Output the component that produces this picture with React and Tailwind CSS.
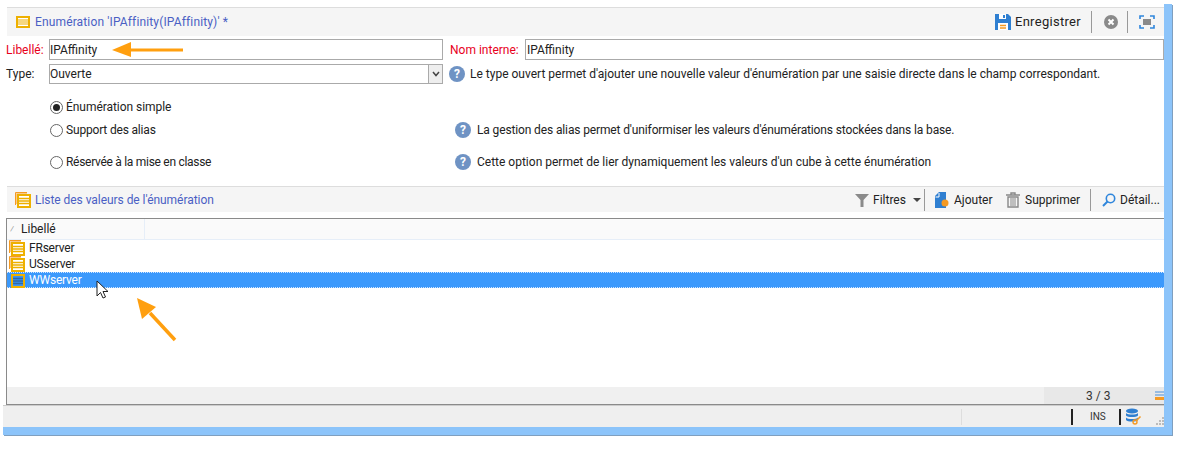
const FONT = "font-['Roboto','Noto_Sans',sans-serif]";

function EnumIcon({ stacked, dark }) {
  return (
    <svg width="16" height="16" viewBox="0 0 16 16" className="shrink-0">
      {stacked && <path d="M0.5 13V0.5H12" fill="none" stroke="#f59a23" strokeWidth="1" />}
      {stacked && <path d="M1.5 12V1.5H12" fill="none" stroke="#f8c98a" strokeWidth="1" />}
      <rect x="3" y="3" width="12" height="12" fill={dark ? '#3b93f0' : '#fff'} stroke="#eeb000" strokeWidth="2" />
      <path d="M4 6.5H14M4 9H14M4 11.5H14" stroke={dark ? '#2f6aa8' : '#eeb000'} strokeWidth="1.4" />
    </svg>
  );
}

function HelpIcon() {
  return (
    <span className="flex h-4 w-4 shrink-0 items-center justify-center rounded-full bg-[#6f93c4] text-[12px] font-bold leading-none text-white">?</span>
  );
}

function Radio({ checked, label, className, labelClass }) {
  return (
    <div className={`flex items-center gap-[3px] ${className}`}>
      <span className="flex h-[13px] w-[13px] items-center justify-center rounded-full border border-[#666] bg-white">
        {checked && <span className="h-[7px] w-[7px] rounded-full bg-[#222]" />}
      </span>
      <span className={labelClass}>{label}</span>
    </div>
  );
}

function Divider() {
  return <span className="block h-[22px] w-px bg-[#999]" />;
}

function Row({ label, selected }) {
  return (
    <div className={`flex h-4 items-center gap-[4px] pl-[2px] tracking-[-0.2px] ${selected ? 'border-y border-dotted border-[#cfe4ff] bg-[#3b99fc] text-white' : ''}`}>
      <EnumIcon stacked={!selected} dark={selected} />
      <span>{label}</span>
    </div>
  );
}

export default function App() {
  return (
    <div className={`${FONT} relative h-[465px] w-[1188px] bg-white pl-[3px] pt-[4px] text-[12px] leading-4 text-[#222]`}>
      <div className="flex h-[431px] w-[1169px] flex-col border-b-[8px] border-r-[8px] border-b-[#8cc4fa] border-r-[#8cc4fa] shadow-[1px_1px_0_#7f9fbf]">
        <div className="flex-1 pl-[4px] pt-[3px]">
          {/* title bar */}
          <div className="flex h-[29px] items-center border-t border-[#ddd] bg-[#f5f5f5] pl-[9px]">
            <svg width="14" height="12" viewBox="0 0 14 12" className="shrink-0">
              <rect x="1" y="1" width="12" height="10" fill="#fff" stroke="#eeb000" strokeWidth="2" />
              <path d="M2 4H12M2 6H12M2 8H12" stroke="#eeb000" strokeWidth="1.2" />
            </svg>
            <span className="ml-[5px] tracking-[0.14px] text-[#4a5fc4]">Enumération 'IPAffinity(IPAffinity)' *</span>
            <div className="ml-auto flex items-center pr-[9px]">
              <svg width="16" height="16" viewBox="0 0 16 16" className="shrink-0">
                <path d="M0 0H13L16 3V16H0Z" fill="#2f7fd1" />
                <rect x="4" y="0" width="7" height="5" fill="#fff" />
                <rect x="8" y="1" width="2" height="3" fill="#2f7fd1" />
                <rect x="3" y="9" width="10" height="7" fill="#fff" />
                <path d="M5 11.5H11M5 14H11" stroke="#f59a23" strokeWidth="1.4" />
              </svg>
              <span className="ml-[4px] text-[13px] tracking-[0.3px]">Enregistrer</span>
              <span className="ml-[10px]"><Divider /></span>
              <svg width="14" height="14" viewBox="0 0 14 14" className="ml-[12px] shrink-0">
                <circle cx="7" cy="7" r="7" fill="#8a8a8a" />
                <path d="M4.5 4.5L9.5 9.5M9.5 4.5L4.5 9.5" stroke="#fff" strokeWidth="2" />
              </svg>
              <span className="ml-[9px]"><Divider /></span>
              <svg width="16" height="14" viewBox="0 0 16 14" className="ml-[11px] shrink-0">
                <path d="M1 4V1H5M11 1H15V4M15 10V13H11M5 13H1V10" fill="none" stroke="#2f86dc" strokeWidth="1.6" />
                <rect x="4" y="4" width="8" height="6" fill="#8a8a8a" />
              </svg>
            </div>
          </div>

          {/* form */}
          <div className="-ml-[1px] mt-[3px] flex items-center">
            <span className="w-[43px] text-[#e8001c]">Libellé:</span>
            <div className="flex h-[21px] w-[394px] items-center border border-[#aaa] bg-white">IPAffinity</div>
            <span className="ml-[7px] w-[75px] text-[#e8001c]">Nom interne:</span>
            <div className="flex h-[21px] flex-1 items-center border border-[#aaa] bg-white pl-[1px]">IPAffinity</div>
          </div>
          <div className="-ml-[1px] mt-[4px] flex items-center">
            <span className="w-[43px]">Type:</span>
            <div className="flex h-[20px] w-[394px] items-center border border-[#aaa] bg-white">
              <span className="flex-1">Ouverte</span>
              <span className="flex h-[18px] w-[14px] items-center justify-center border-l border-[#aaa] bg-[#eee]">
                <svg width="8" height="6" viewBox="0 0 8 6"><path d="M1 1L4 4.5L7 1" fill="none" stroke="#444" strokeWidth="1.5" /></svg>
              </span>
            </div>
            <span className="ml-[6px]"><HelpIcon /></span>
            <span className="ml-[5px]">Le type ouvert permet d'ajouter une nouvelle valeur d'énumération par une saisie directe dans le champ correspondant.</span>
          </div>

          <div className="mt-[15px] pl-[43px]">
            <Radio checked label="Énumération simple" labelClass="tracking-[-0.05px]" />
            <div className="mt-[7px] flex items-center">
              <Radio label="Support des alias" className="w-[405px]" labelClass="tracking-[-0.18px]" />
              <HelpIcon />
              <span className="ml-[6px] tracking-[-0.13px]">La gestion des alias permet d'uniformiser les valeurs d'énumérations stockées dans la base.</span>
            </div>
            <div className="mt-[16px] flex items-center">
              <Radio label="Réservée à la mise en classe" className="w-[405px]" labelClass="tracking-[-0.29px]" />
              <HelpIcon />
              <span className="ml-[6px]">Cette option permet de lier dynamiquement les valeurs d'un cube à cette énumération</span>
            </div>
          </div>

          {/* list */}
          <div className="mt-[16px] flex h-[26px] items-center border-t border-[#ddd] bg-[#f5f5f5] pl-[8px]">
            <EnumIcon stacked />
            <span className="ml-[4px] tracking-[-0.05px] text-[#4a5fc4]">Liste des valeurs de l'énumération</span>
            <div className="ml-auto flex items-center pr-[5px]">
              <svg width="14" height="14" viewBox="0 0 14 14"><path d="M0 1H14L8.5 7V14H5.5V7Z" fill="#8a8a8a" /></svg>
              <span className="ml-[4px] w-[31px]">Filtres</span>
              <svg width="8" height="4" viewBox="0 0 8 4" className="ml-[9px]"><path d="M0 0H8L4 4Z" fill="#444" /></svg>
              <span className="ml-[3px]"><Divider /></span>
              <svg width="16" height="16" viewBox="0 0 16 16" className="ml-[9px]">
                <path d="M1 4L5 0H12V16H1Z" fill="#2f7fd1" />
                <path d="M5 1V5H1.5" fill="none" stroke="#fff" strokeWidth="1" />
                <circle cx="11" cy="11" r="3.5" fill="#f59a23" />
              </svg>
              <span className="ml-[4px] w-[39px]">Ajouter</span>
              <svg width="14" height="16" viewBox="0 0 14 16" className="ml-[13px]">
                <path d="M0 3H14M5 3V1H9V3" fill="none" stroke="#888" strokeWidth="1.4" />
                <path d="M2 5H12V15H2Z" fill="none" stroke="#888" strokeWidth="1.4" />
                <path d="M5 6V14M7 6V14M9 6V14" stroke="#888" strokeWidth="1" />
              </svg>
              <span className="ml-[5px] w-[55px]">Supprimer</span>
              <span className="ml-[10px]"><Divider /></span>
              <svg width="14" height="14" viewBox="0 0 14 14" className="ml-[11px]">
                <circle cx="8.5" cy="5.5" r="4.2" fill="none" stroke="#2f86dc" strokeWidth="1.6" />
                <path d="M5.5 8.5L1 13" stroke="#2f86dc" strokeWidth="2" />
              </svg>
              <span className="ml-[4px] w-[39px]">Détail...</span>
            </div>
          </div>

          <div className="-ml-[1px] mt-[6px] flex h-[187px] flex-col border-b border-l border-t border-[#8a8a8a]">
            <div className="flex h-[21px] items-center border-b border-[#e6eef8] bg-[#fafafa]">
              <span className="flex h-full w-[138px] items-center border-r border-[#e6eef8] pl-[3px]">
                <span className="w-[11px] text-[9px] text-[#888]">⁄</span>
                <span>Libellé</span>
              </span>
            </div>
            <Row label="FRserver" />
            <Row label="USserver" />
            <Row label="WWserver" selected />
            <div className="flex-1" />
            <div className="flex h-[17px] items-center bg-[#f0f0f0]">
              <div className="ml-auto flex h-full w-[120px] items-center bg-[#e8e8e8]">
                <span className="ml-[42px] text-[#333]">3 / 3</span>
                <svg width="9" height="9" viewBox="0 0 9 9" className="ml-auto"><path d="M0 1H9M0 4H9" stroke="#4a90d9" strokeWidth="1" /><rect x="0" y="6" width="9" height="3" fill="#f59a23" /></svg>
              </div>
            </div>
          </div>
        </div>

        {/* status bar */}
        <div className="flex h-[22px] items-center border-t border-[#ccc] bg-[#efefef]">
          <span className="ml-[958px] h-[16px] w-px bg-[#ddd]" />
          <span className="ml-[109px] h-[16px] w-[2px] bg-[#222]" />
          <span className="ml-[17px] w-[17px] text-[10px] text-[#333]">INS</span>
          <span className="ml-[12px] h-[16px] w-[2px] bg-[#222]" />
          <svg width="17" height="17" viewBox="0 0 16 17" className="ml-[4px]">
            <ellipse cx="6.5" cy="3" rx="6" ry="2.5" fill="#2f7fd1" />
            <path d="M0.5 5C2 7 11 7 12.5 5V7.5C11 9.5 2 9.5 0.5 7.5ZM0.5 9.5C2 11.5 11 11.5 12.5 9.5V12C11 14 2 14 0.5 12Z" fill="#2f7fd1" />
            <circle cx="9.5" cy="14" r="2" fill="none" stroke="#f59a23" strokeWidth="1.4" />
            <path d="M11 12.5L15 8.5" stroke="#f59a23" strokeWidth="1.6" />
          </svg>
          <svg width="8" height="8" viewBox="0 0 8 8" className="ml-auto mt-[8px]" fill="#bbb">
            <rect x="6" y="0" width="2" height="2" /><rect x="3" y="3" width="2" height="2" /><rect x="6" y="3" width="2" height="2" />
            <rect x="0" y="6" width="2" height="2" /><rect x="3" y="6" width="2" height="2" /><rect x="6" y="6" width="2" height="2" />
          </svg>
        </div>
      </div>

      {/* annotation arrows and cursor over the shot */}
      <svg width="72" height="16" viewBox="0 0 72 16" className="absolute left-[112px] top-[41px]">
        <path d="M71 9H16" stroke="#ff9f0f" strokeWidth="3" />
        <path d="M0 9L19 1V16Z" fill="#ff9f0f" />
      </svg>
      <svg width="42" height="44" viewBox="0 0 42 44" className="absolute left-[136px] top-[298px]">
        <path d="M39 42L14 15" stroke="#ff9f0f" strokeWidth="3.5" />
        <path d="M1 0L20 9L6 21Z" fill="#ff9f0f" />
      </svg>
      <svg width="13" height="20" viewBox="0 0 13 20" className="absolute left-[96px] top-[280px]">
        <path d="M1 1V16L4.5 12.5L7 18L9.5 17L7 11.5H12Z" fill="#fff" stroke="#222" strokeWidth="1" />
      </svg>
    </div>
  );
}
